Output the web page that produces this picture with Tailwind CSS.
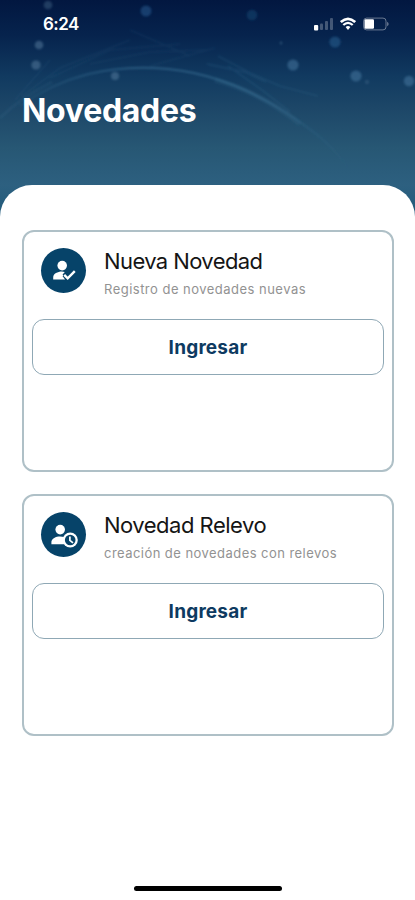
<!DOCTYPE html>
<html lang="es">

<head>
  <meta charset="UTF-8">
  <meta name="viewport" content="width=device-width, initial-scale=1.0">
  <title>Novedades</title>
  <script src="https://cdn.jsdelivr.net/npm/@tailwindcss/browser@4"></script>
</head>

<body class="bg-white font-['Inter','Liberation_Sans',sans-serif]">
  <div class="relative flex h-[900px] w-full flex-col overflow-hidden">

    <!-- header background -->
    <svg class="absolute inset-x-0 top-0 h-[218px] w-full" viewBox="0 0 415 218" preserveAspectRatio="none" fill="none">
      <defs>
        <linearGradient id="sky" x1="0" y1="0" x2="0" y2="1">
          <stop offset="0" stop-color="#021740" />
          <stop offset="0.16" stop-color="#06234d" />
          <stop offset="0.35" stop-color="#113a60" />
          <stop offset="0.5" stop-color="#1d4768" />
          <stop offset="0.68" stop-color="#275774" />
          <stop offset="0.85" stop-color="#2d6080" />
          <stop offset="1" stop-color="#205a7a" />
        </linearGradient>
        <linearGradient id="arc" x1="0" y1="0" x2="1" y2="0">
          <stop offset="0" stop-color="#4682a6" stop-opacity="0.1" />
          <stop offset="0.35" stop-color="#4682a6" stop-opacity="0.45" />
          <stop offset="0.7" stop-color="#4682a6" stop-opacity="0.45" />
          <stop offset="1" stop-color="#4682a6" stop-opacity="0" />
        </linearGradient>
        <filter id="soft" x="-10%" y="-10%" width="120%" height="120%">
          <feGaussianBlur stdDeviation="0.9" />
        </filter>
      </defs>
      <rect width="415" height="218" fill="url(#sky)" />
      <g filter="url(#soft)">
        <path d="M20 106C65 74 110 66 155 68S245 86 285 112S335 150 350 170" stroke="url(#arc)" stroke-width="2" />
        <path d="M215 80C245 88 275 104 300 124" stroke="#4682a6" stroke-opacity="0.14" stroke-width="5" />
        <path d="M218 56L250 73L280 86L318 96M207 64L245 72L266 82M228 66L262 90L290 112" stroke="#4682a6" stroke-opacity="0.16" stroke-width="1.8" />
        <path d="M15 100L50 60M22 96L60 68L130 40M50 78L110 50L180 44M90 64L150 52L207 50M130 30L190 56M150 66L215 48" stroke="#4682a6" stroke-opacity="0.1" stroke-width="1.6" />
        <path d="M0 118Q20 98 52 82" stroke="#4682a6" stroke-opacity="0.12" stroke-width="3" />
        <g fill="#5a7f9f" fill-opacity="0.5">
          <circle cx="48" cy="5" r="4.3" fill-opacity="0.35" />
          <circle cx="146" cy="11" r="5.5" fill="#2b5f96" />
          <circle cx="39" cy="45" r="4.3" />
          <circle cx="36" cy="65" r="4.6" />
          <circle cx="115" cy="76" r="4" />
          <circle cx="252" cy="15" r="5.3" fill="#1c4a76" />
          <circle cx="335" cy="42" r="5.6" fill="#2e6597" />
          <circle cx="293" cy="65" r="5.6" fill="#4a7ba5" />
          <circle cx="356" cy="76" r="5.6" fill="#4a7ba5" />
          <circle cx="367" cy="82" r="2" fill-opacity="0.3" />
          <circle cx="409" cy="81" r="5.2" fill="#4a7ba5" />
          <circle cx="281" cy="43" r="1.2" />
        </g>
      </g>
    </svg>

    <!-- status bar -->
    <div class="relative flex h-12 shrink-0 items-center justify-between pr-[26px] pl-[43px] text-white">
      <span class="text-[17px] leading-none font-semibold tracking-[-0.5px]">6:24</span>
      <div class="flex items-center">
        <svg class="h-3.5 w-5" viewBox="0 0 20 14" fill="currentColor">
          <rect x="0" y="8" width="4.2" height="5.5" rx="1" />
          <g fill-opacity="0.25">
            <rect x="6" y="6.5" width="3" height="6.5" rx="1" />
            <rect x="11" y="4" width="3" height="9" rx="1" />
            <rect x="16" y="1" width="3" height="12" rx="1" />
          </g>
        </svg>
        <svg class="ml-1.5 h-3.5 w-4" viewBox="0 0 16 14" fill="none" stroke="currentColor">
          <path d="M0.8 5.1Q8 -1.5 15.2 5.1" stroke-width="2.7" />
          <path d="M3.3 8Q8 3.7 12.7 8" stroke-width="2.3" />
          <path d="M5.6 10.1Q8 7.9 10.4 10.1L8 12.9Z" fill="currentColor" stroke="none" />
        </svg>
        <svg class="ml-[7px] h-3.5 w-[26px]" viewBox="0 0 26 14" fill="none">
          <rect x="0.6" y="1.1" width="22.4" height="11.8" rx="3" stroke="#fff" stroke-opacity="0.4" />
          <rect x="1.5" y="2.2" width="9.5" height="9.6" rx="1.2" fill="#fff" />
          <path d="M24.2 4.8Q25.6 5.6 25.6 7T24.2 9.2Z" fill="#fff" fill-opacity="0.45" />
        </svg>
      </div>
    </div>

    <header class="relative h-[137px] shrink-0 px-[22px] pt-[43px]">
      <h1 class="text-[32px] leading-10 font-bold tracking-[-0.3px] text-white">Novedades</h1>
    </header>

    <!-- content sheet -->
    <main class="relative flex flex-1 flex-col gap-[22px] rounded-t-[32px] bg-white pr-[21px] pl-[22px] pt-[45px]">
      <section class="h-[242px] rounded-xl border-2 border-[#afc0c7] px-2 pt-[15px]">
        <div class="flex items-start pl-[9px]">
          <div class="mt-[1px] flex size-[45px] items-center justify-center rounded-full bg-[#064369]">
            <svg class="size-6" viewBox="0 0 24 24" fill="#fff">
              <circle cx="10.2" cy="6.6" r="4.8" />
              <path d="M1.2 20.6V18.2C1.2 14.8 5.8 12.6 9.8 12.6Q11.6 12.6 12.8 13L10.6 15.6L13 20.6Z" />
              <path d="M12.2 15.8L15.7 19.3L22.8 12.2" fill="none" stroke="#064369" stroke-width="4.6" />
              <path d="M12.2 15.8L15.7 19.3L22.8 12.2" fill="none" stroke="#fff" stroke-width="2.4" />
            </svg>
          </div>
          <div class="ml-[18px]">
            <h2 class="text-[22px] leading-7 tracking-[-0.6px] text-[#151515]">Nueva Novedad</h2>
            <p class="mt-1 text-[13px] leading-5 tracking-[0.48px] text-[#929292]">Registro de novedades nuevas</p>
          </div>
        </div>
        <button class="mt-5 h-14 w-full rounded-xl border border-[#8fa8b5] pt-[2px] text-[19px] font-bold tracking-[0.2px] text-[#0d3a61]">Ingresar</button>
      </section>

      <section class="h-[242px] rounded-xl border-2 border-[#afc0c7] px-2 pt-[15px]">
        <div class="flex items-start pl-[9px]">
          <div class="mt-[1px] flex size-[45px] items-center justify-center rounded-full bg-[#064369]">
            <svg class="h-[26px] w-7" viewBox="0 0 28 26" fill="#fff">
              <circle cx="10.2" cy="7.6" r="4.8" />
              <path d="M1.4 22.2V20C1.4 16.4 6 14.4 10 14.4Q12.2 14.4 14 15V22.2Z" />
              <circle cx="20.2" cy="18" r="7.6" />
              <circle cx="20.2" cy="18" r="5.3" fill="#064369" />
              <path d="M19.9 14.4V18.4L23 20.9" fill="none" stroke="#fff" stroke-width="1.7" />
            </svg>
          </div>
          <div class="ml-[18px]">
            <h2 class="text-[22px] leading-7 tracking-[-0.5px] text-[#151515]">Novedad Relevo</h2>
            <p class="mt-1 text-[13px] leading-5 tracking-[0.45px] text-[#929292]">creación de novedades con relevos</p>
          </div>
        </div>
        <button class="mt-5 h-14 w-full rounded-xl border border-[#8fa8b5] pt-[2px] text-[19px] font-bold tracking-[0.2px] text-[#0d3a61]">Ingresar</button>
      </section>
    </main>

    <!-- home indicator -->
    <div class="relative flex h-[14px] shrink-0 items-start justify-center bg-white">
      <div class="h-[5px] w-[148px] rounded-full bg-black"></div>
    </div>
  </div>
</body>

</html>
